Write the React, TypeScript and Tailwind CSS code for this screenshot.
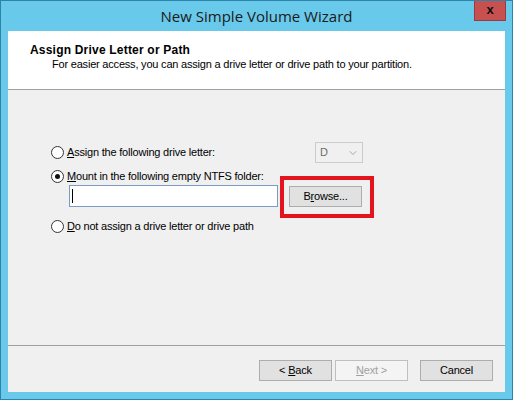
import { ChevronDown } from 'lucide-react';

const ui = { fontFamily: '"Liberation Sans", Arial, sans-serif' };

function Radio({ checked, children }: { checked?: boolean; children: React.ReactNode }) {
  return (
    <div className="flex items-center gap-[3px] h-[14px]">
      <span className="w-[13px] h-[13px] rounded-full border border-[#333333] bg-white flex items-center justify-center shrink-0">
        {checked && <span className="w-[5px] h-[5px] rounded-full bg-[#111111]" />}
      </span>
      <span className="text-[11px] tracking-[-0.2px] text-[#000000] leading-none">{children}</span>
    </div>
  );
}

function Btn({ children, disabled }: { children: React.ReactNode; disabled?: boolean }) {
  return (
    <div
      className={`w-[73px] h-[21px] flex items-center justify-center text-[11px] tracking-[-0.2px] border ${
        disabled ? 'bg-[#f4f4f4] border-[#bfbfbf] text-[#a0a0a0]' : 'bg-[#e1e1e1] border-[#adadad] text-[#000000]'
      }`}
    >
      {children}
    </div>
  );
}

export default function App() {
  return (
    <div style={ui} className="w-[513px] h-[400px] bg-[#69c9ea] border border-[#2d84a8] flex flex-col overflow-hidden">
      {/* title bar */}
      <div className="relative h-[30px] shrink-0 flex items-center justify-center">
        <span style={{ fontFamily: '"Open Sans", "Noto Sans", sans-serif' }} className="text-[15px] text-[#1a1a1a] mt-[1px]">
          New Simple Volume Wizard
        </span>
        <div className="absolute right-[6px] top-[-1px] w-[32px] h-[21px] bg-[#c75050] border border-[#9a3c3c] flex items-center justify-center">
          <span className="text-[13px] font-bold text-[#111111] leading-none mt-[-2px]">x</span>
        </div>
      </div>

      {/* client */}
      <div className="mx-[7px] flex-1 mb-[7px] flex flex-col bg-[#f0f0f0]">
        <div className="h-[59px] bg-white border-b border-[#a0a0a0] pl-[22px] pt-[12px] shrink-0">
          <div className="text-[12px] tracking-[0.2px] font-bold text-black leading-[14px]">Assign Drive Letter or Path</div>
          <div className="text-[11px] tracking-[-0.2px] text-black leading-[14px] pl-[22px]">
            For easier access, you can assign a drive letter or drive path to your partition.
          </div>
        </div>

        <div className="flex-1 pl-[43px] pt-[52px]">
          <div className="flex items-center h-[21px]">
            <div className="w-[264px]">
              <Radio>
                <u>A</u>ssign the following drive letter:
              </Radio>
            </div>
            <div className="w-[48px] h-[21px] border border-[#cccccc] bg-[#f0f0f0] flex items-center justify-between pl-[4px] pr-[3px]">
              <span className="text-[11px] text-[#6d6d6d]">D</span>
              <ChevronDown className="w-[12px] h-[12px] text-[#a8a8a8]" strokeWidth={2} />
            </div>
          </div>

          <div className="mt-[6px]">
            <Radio checked>
              <u>M</u>ount in the following empty NTFS folder:
            </Radio>
          </div>

          <div className="flex items-center pl-[18px] mt-[2px] gap-[11px]">
            <div className="w-[209px] h-[22px] bg-white border border-[#7a9cc3] flex items-center pl-[2px]">
              <span className="w-px h-[14px] bg-black" />
            </div>
            <div className="relative">
              <Btn>
                <span>
                  B<u>r</u>owse...
                </span>
              </Btn>
              <span className="absolute left-[-9px] right-[-12px] top-[-10px] bottom-[-11px] border-[4px] border-[#e3141e]" />
            </div>
          </div>

          <div className="mt-[12px]">
            <Radio>
              <u>D</u>o not assign a drive letter or drive path
            </Radio>
          </div>
        </div>

        <div className="h-[47px] shrink-0 border-t border-[#a0a0a0] flex items-start justify-end pt-[14px] pr-[12px]">
          <Btn>
            <span>
              &lt; <u>B</u>ack
            </span>
          </Btn>
          <div className="w-[3px]" />
          <Btn disabled>
            <span>
              <u>N</u>ext &gt;
            </span>
          </Btn>
          <div className="w-[12px]" />
          <Btn>Cancel</Btn>
        </div>
      </div>
    </div>
  );
}
